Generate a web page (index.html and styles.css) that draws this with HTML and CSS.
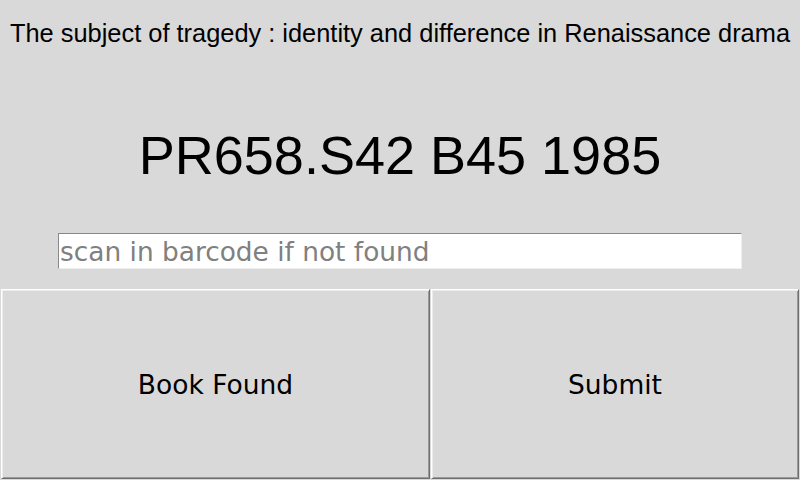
FILE: index.html
```html
<!DOCTYPE html>
<html>
<head>
<meta charset="utf-8">
<link rel="stylesheet" href="styles.css">
</head>
<body>
<div class="app">
  <div class="title">The subject of tragedy : identity and difference in Renaissance drama</div>
  <div class="callno">PR658.S42 B45 1985</div>
  <div class="entry-row">
    <input class="entry" type="text" placeholder="scan in barcode if not found">
  </div>
  <div class="buttons">
    <button class="btn">Book Found</button>
    <button class="btn">Submit</button>
  </div>
</div>
</body>
</html>
```

FILE: styles.css
```css
html, body {
  margin: 0;
  padding: 0;
  background: #d9d9d9;
  width: 800px;
  height: 480px;
  overflow: hidden;
}
.app {
  display: flex;
  flex-direction: column;
  width: 800px;
  height: 480px;
}
.title {
  padding-top: 18px;
  height: 30px;
  line-height: 30px;
  font-family: "Liberation Sans", Arial, sans-serif;
  font-size: 25.4px;
  text-align: center;
  color: #000;
  white-space: nowrap;
}
.callno {
  margin-top: 77px;
  height: 60px;
  line-height: 60px;
  font-family: "Liberation Sans", Arial, sans-serif;
  font-size: 54px;
  text-align: center;
  color: #000;
  white-space: nowrap;
}
.entry-row {
  margin-top: 48px;
  display: flex;
  padding-left: 58px;
}
.entry {
  box-sizing: border-box;
  width: 684px;
  height: 36px;
  margin: 0;
  padding: 0 0 0 1px;
  border: 1px solid;
  border-color: #888888 #eeeeee #eeeeee #888888;
  background: #ffffff;
  font-family: "DejaVu Sans", sans-serif;
  font-size: 26.4px;
  color: #000;
  outline: none;
}
.entry::placeholder {
  color: #808080;
  opacity: 1;
}
.buttons {
  margin-top: 20px;
  display: grid;
  grid-template-columns: 429px 368px;
  column-gap: 1px;
  padding-left: 1px;
}
.btn {
  box-sizing: border-box;
  height: 190px;
  margin: 0;
  padding: 0;
  background: #d9d9d9;
  border: 1px solid;
  border-color: #ffffff #6f6f6f #6f6f6f #ffffff;
  box-shadow: inset 1px 1px 0 #ececec, inset -1px -1px 0 #9a9a9a;
  font-family: "DejaVu Sans", sans-serif;
  font-size: 26.5px;
  color: #000;
}
```
